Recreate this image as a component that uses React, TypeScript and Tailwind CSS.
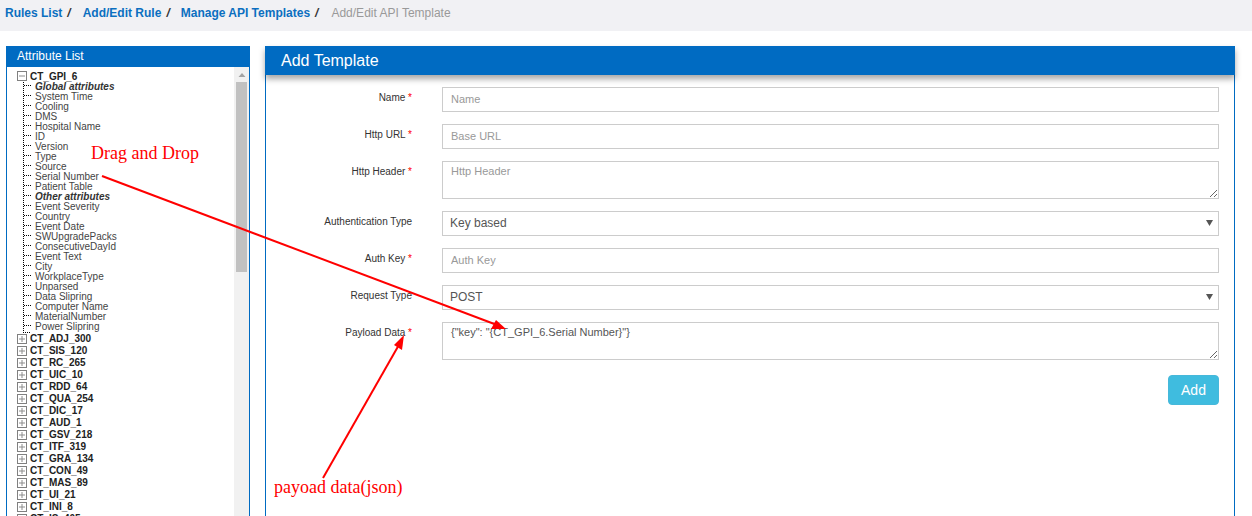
import React from 'react';

const globalAttrs = ['System Time', 'Cooling', 'DMS', 'Hospital Name', 'ID', 'Version', 'Type', 'Source', 'Serial Number', 'Patient Table'];
const otherAttrs = ['Event Severity', 'Country', 'Event Date', 'SWUpgradePacks', 'ConsecutiveDayId', 'Event Text', 'City', 'WorkplaceType', 'Unparsed', 'Data Slipring', 'Computer Name', 'MaterialNumber', 'Power Slipring'];
const roots = ['CT_ADJ_300', 'CT_SIS_120', 'CT_RC_265', 'CT_UIC_10', 'CT_RDD_64', 'CT_QUA_254', 'CT_DIC_17', 'CT_AUD_1', 'CT_GSV_218', 'CT_ITF_319', 'CT_GRA_134', 'CT_CON_49', 'CT_MAS_89', 'CT_UI_21', 'CT_INI_8', 'CT_IS_405'];

function TreeBox({ open }: { open?: boolean }) {
  return (
    <svg width="10" height="10" viewBox="0 0 10 10" className="shrink-0">
      <rect x="0.5" y="0.5" width="9" height="9" fill="#fff" stroke="#808080" />
      <path d={open ? 'M2 5H8' : 'M2 5H8M5 2V8'} stroke="#8c8c8c" />
    </svg>
  );
}

function Leaf({ label, heading }: { label: string; heading?: boolean }) {
  return (
    <div className="flex h-[10px] items-center pl-[16px]">
      <div className="h-[10px] w-[12px] shrink-0 bg-[linear-gradient(#000_50%,transparent_50%)] bg-[length:1px_2px] bg-repeat-y pt-[3px] pl-px">
        <div className="h-px w-[7px] bg-[linear-gradient(90deg,#000_50%,transparent_50%)] bg-[length:2px_1px]" />
      </div>
      <span className={heading ? 'text-[10px] leading-[10px] font-bold italic text-[#333]' : 'text-[10px] leading-[10px] text-[#444]'}>{label}</span>
    </div>
  );
}

function Root({ label, open }: { label: string; open?: boolean }) {
  return (
    <div className="flex h-[12px] items-center gap-[3px] pl-[10px]">
      <TreeBox open={open} />
      <span className={open ? 'pt-[2px] text-[10px] leading-[10px] font-bold text-[#222]' : 'text-[10px] leading-[10px] font-bold text-[#222]'}>{label}</span>
    </div>
  );
}

function Label({ text, required = true }: { text: string; required?: boolean }) {
  return (
    <label className="w-[146px] shrink-0 pt-[4px] text-right text-[10px] leading-[14px] text-[#333]">
      {text}
      {required && <span className="text-[#f00]"> *</span>}
    </label>
  );
}

function Field({ placeholder, label }: { placeholder: string; label: string }) {
  return (
    <div className="flex gap-[30px]">
      <Label text={label} />
      <input readOnly placeholder={placeholder} className="h-[25px] w-[777px] border border-[#ccc] px-[8px] pb-[2px] text-[11px] text-[#555] outline-none placeholder:text-[#999]" />
    </div>
  );
}

function SelectField({ label, value }: { label: string; value: string }) {
  return (
    <div className="flex gap-[30px]">
      <Label text={label} required={false} />
      <div className="flex h-[25px] w-[777px] items-center justify-between border border-[#ccc] pr-[5px] pb-[2px] pl-[7px] text-[12px] text-[#555]">
        <span>{value}</span>
        <svg width="7" height="6" viewBox="0 0 7 6"><path d="M0 0H7L3.5 6Z" fill="#555" /></svg>
      </div>
    </div>
  );
}

function TextareaField({ label, placeholder, value }: { label: string; placeholder?: string; value?: string }) {
  return (
    <div className="flex gap-[30px]">
      <Label text={label} />
      <textarea readOnly placeholder={placeholder} defaultValue={value} className="block h-[38px] w-[777px] border border-[#ccc] px-[8px] py-[2px] text-[11px] leading-[14px] text-[#555] outline-none placeholder:text-[#999]" />
    </div>
  );
}

export default function App() {
  return (
    <div className="relative h-[516px] w-[1252px] overflow-hidden bg-white font-['Liberation_Sans',sans-serif]">
      <nav className="flex h-[31px] items-start bg-[#f1f1f4] pt-[5px] pl-[5px] text-[12px] leading-[16px]">
        <a className="font-bold text-[#0b6fc0]">Rules List</a>
        <span className="ml-[5px] font-bold text-[#333] italic">/</span>
        <a className="ml-[12px] font-bold text-[#0b6fc0]">Add/Edit Rule</a>
        <span className="ml-[5px] font-bold text-[#333] italic">/</span>
        <a className="ml-[11px] font-bold text-[#0b6fc0]">Manage API Templates</a>
        <span className="ml-[5px] font-bold text-[#333] italic">/</span>
        <span className="ml-[13px] text-[#999]">Add/Edit API Template</span>
      </nav>

      <div className="flex items-start gap-[15px] pt-[15px] pl-[6px]">
        <aside className="h-[480px] w-[244px] shrink-0 border-x border-[#006bc2]">
          <h2 className="-mx-px h-[21px] bg-[#006bc2] pl-[11px] text-[12px] leading-[21px] font-normal text-white">Attribute List</h2>
          <div className="flex h-[459px] overflow-hidden">
            <div className="w-[227px] shrink-0 pt-[3px]">
              <Root label="CT_GPI_6" open />
              <Leaf label="Global attributes" heading />
              {globalAttrs.map((a) => <Leaf key={a} label={a} />)}
              <Leaf label="Other attributes" heading />
              {otherAttrs.map((a) => <Leaf key={a} label={a} />)}
              <div className="ml-[16px] h-px w-[7px] bg-[linear-gradient(90deg,#000_50%,transparent_50%)] bg-[length:2px_1px]" />
              {roots.map((r) => <Root key={r} label={r} />)}
            </div>
            <div className="flex h-[459px] w-[15px] shrink-0 flex-col items-center bg-[#f1f1f1]">
              <svg width="8" height="15" viewBox="0 0 8 15" className="shrink-0"><path d="M0.5 10L4 6L7.5 10Z" fill="#a3a3a3" /></svg>
              <div className="h-[190px] w-[11px] bg-[#c1c1c1]" />
            </div>
          </div>
        </aside>

        <section className="h-[480px] w-[970px] shrink-0 border-x border-[#006bc2]">
          <h1 className="-mx-px h-[29px] bg-[#006bc2] pl-[16px] text-[16px] leading-[29px] font-normal text-white shadow-[0_4px_6px_rgba(0,0,0,0.35)]">Add Template</h1>
          <form className="flex flex-col gap-[12px] pt-[12px]">
            <Field label="Name" placeholder="Name" />
            <Field label="Http URL" placeholder="Base URL" />
            <TextareaField label="Http Header" placeholder="Http Header" />
            <SelectField label="Authentication Type" value="Key based" />
            <Field label="Auth Key" placeholder="Auth Key" />
            <SelectField label="Request Type" value="POST" />
            <TextareaField label="Payload Data" value={'{"key": "{CT_GPI_6.Serial Number}"}'} />
            <div className="flex w-[953px] justify-end pt-[3px]">
              <button type="button" className="h-[30px] w-[51px] rounded-[4px] border border-[#46b8da] bg-[#3fbcdf] text-[14px] text-white">Add</button>
            </div>
          </form>
        </section>
      </div>

      {/* annotations drawn over the page */}
      <svg width="1252" height="516" className="pointer-events-none absolute top-0 left-0">
        <path d="M102 176L497 325" stroke="#f00" strokeWidth="2" fill="none" />
        <path d="M506 329L491 329L496 320Z" fill="#f00" />
        <path d="M323 478L400 343" stroke="#f00" strokeWidth="2" fill="none" />
        <path d="M404 335L402 350L394 345Z" fill="#f00" />
      </svg>
      <span className="absolute top-[143px] left-[91px] font-['Liberation_Serif',serif] text-[18px] leading-[20px] text-[#f00]">Drag and Drop</span>
      <span className="absolute top-[477px] left-[274px] font-['Liberation_Serif',serif] text-[18px] leading-[20px] text-[#f00]">payoad data(json)</span>
    </div>
  );
}
